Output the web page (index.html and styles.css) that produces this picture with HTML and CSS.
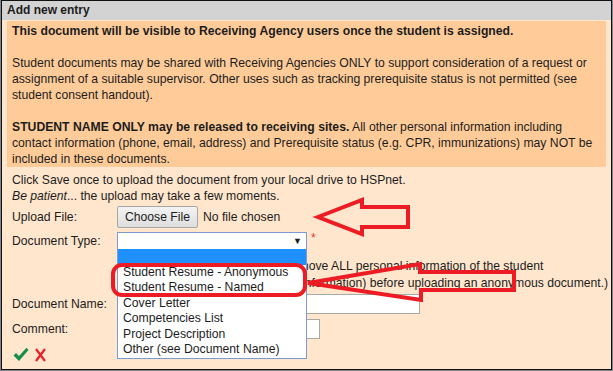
FILE: index.html
```html
<!DOCTYPE html>
<html lang="en">
<head>
    <meta charset="UTF-8">
    <title>Add new entry</title>
    <link rel="stylesheet" href="styles.css">
</head>
<body>
    <div class="dialog">
        <div class="title-bar">Add new entry</div>
        <div class="content">
            <div class="notice">
                <p><b>This document will be visible to Receiving Agency users once the student is assigned.</b></p>
                <p>Student documents may be shared with Receiving Agencies ONLY to support consideration of a request or assignment of a suitable supervisor. Other uses such as tracking prerequisite status is not permitted (see student consent handout).</p>
                <p><b>STUDENT NAME ONLY may be released to receiving sites.</b> All other personal information including contact information (phone, email, address) and Prerequisite status (e.g. CPR, immunizations) may NOT be included in these documents.</p>
            </div>

            <p class="intro">Click Save once to upload the document from your local drive to HSPnet.<br><i>Be patient</i>... the upload may take a few moments.</p>

            <div class="form-row upload-row">
                <label>Upload File:</label>
                <button type="button" class="file-btn">Choose File</button>
                <span class="file-name">No file chosen</span>
            </div>

            <div class="form-row type-row">
                <label>Document Type:</label>
                <div class="select-wrap">
                    <div class="select">
                        <span class="select-arrow">&#9660;</span>
                    </div>
                    <ul class="options">
                        <li class="selected">&nbsp;</li>
                        <li>Student Resume - Anonymous</li>
                        <li>Student Resume - Named</li>
                        <li>Cover Letter</li>
                        <li>Competencies List</li>
                        <li>Project Description</li>
                        <li>Other (see Document Name)</li>
                    </ul>
                </div>
                <span class="required">*</span>
            </div>

            <p class="type-note">(For an anonymous file, please remove ALL personal information of the student<br>(name, phone, e-mail and contact information) before uploading an anonymous document.)</p>

            <div class="form-row name-row">
                <label>Document Name:</label>
                <input type="text" class="text-input name-input">
            </div>

            <div class="form-row comment-row">
                <label>Comment:</label>
                <input type="text" class="text-input comment-input">
            </div>

            <div class="actions">
                <svg class="icon-save" width="16" height="15" viewBox="0 0 16 15">
                    <path d="M0.5 8.5 L3 6 L6 9 L13.5 0.8 L15.5 3 L6 14 Z" />
                </svg>
                <svg class="icon-cancel" width="11" height="14" viewBox="0 0 11 14">
                    <path d="M1 1 L10 13 M10 1 L1 13" />
                </svg>
            </div>
        </div>

        <!-- red markup drawn over the screenshot -->
        <svg class="markup" width="613" height="371" viewBox="0 0 613 371">
            <polygon points="318,217 362,200 362,207 408,207 408,227 362,227 362,234" />
            <rect x="113" y="265" width="192" height="30" rx="9" />
            <polygon points="308,283 420,264 420,272 514,272 514,290 421,290 421,300" />
        </svg>
    </div>
</body>
</html>
```

FILE: styles.css
```css
* {
    margin: 0;
    padding: 0;
    box-sizing: border-box;
}

body {
    font-family: Arial, "Liberation Sans", sans-serif;
    font-size: 12.2px;
    line-height: 16px;
    color: #1c1c1c;
    background: #7d8790;
    width: 613px;
    height: 371px;
    overflow: hidden;
}

.dialog {
    position: relative;
    margin-left: 1px;
    width: 611px;
    height: 370px;
    border: 1px solid #111;
    background: #ffe6cc;
}

.title-bar {
    background: #d3d3d3;
    font-weight: bold;
    font-size: 12px;
    height: 19px;
    line-height: 18px;
    padding-left: 5px;
}

.content {
    padding: 1px 5px 0 5px;
}

.notice {
    background: #ffcc99;
    padding: 2px 5px 0 5px;
    height: 146px;
}

.notice p {
    margin-bottom: 16px;
}

.notice p:last-child {
    margin-bottom: 0;
}

.intro {
    padding: 5px 5px 0 5px;
}

.form-row {
    display: flex;
    align-items: center;
    padding-left: 5px;
}

.form-row label {
    width: 105px;
    flex-shrink: 0;
}

.upload-row {
    margin-top: 2px;
    height: 22px;
}

.file-btn {
    font-family: inherit;
    font-size: 12.2px;
    color: #1c1c1c;
    height: 22px;
    width: 81px;
    border: 1px solid #a6a6a6;
    border-radius: 2px;
    background: linear-gradient(#f3f3f3, #dedede);
}

.file-name {
    margin-left: 5px;
}

.type-row {
    margin-top: 4px;
    height: 18px;
}

.select-wrap {
    position: relative;
}

.select {
    width: 190px;
    height: 18px;
    background: #fff;
    border: 1px solid #7b9bd1;
    position: relative;
}

.select-arrow {
    position: absolute;
    right: 4px;
    top: 0;
    font-size: 9px;
    line-height: 16px;
}

.options {
    position: absolute;
    left: 0;
    top: 17px;
    width: 190px;
    list-style: none;
    background: #fff;
    border: 1px solid #7b9bd1;
    border-top: none;
    z-index: 2;
}

.options li {
    height: 15.5px;
    line-height: 15.5px;
    padding-left: 5px;
    white-space: nowrap;
}

.options li.selected {
    background: #1e90ff;
}

.required {
    color: #e8322e;
    font-size: 12px;
    margin-left: 4px;
    align-self: flex-start;
    line-height: 12px;
}

.type-note {
    margin: 8px 0 0 110px;
    line-height: 17px;
    white-space: nowrap;
}

.name-row {
    margin-top: 2px;
    height: 20px;
}

.text-input {
    height: 20px;
    border: 1px solid #a9a9a9;
    background: #fff;
}

.name-input {
    width: 303px;
}

.comment-row {
    margin-top: 5px;
    height: 20px;
}

.comment-input {
    width: 203px;
}

.actions {
    margin-top: 8px;
    padding-left: 6px;
    display: flex;
    align-items: center;
    gap: 6px;
}

.icon-save path {
    fill: #14904a;
}

.icon-cancel path {
    fill: none;
    stroke: #e8202a;
    stroke-width: 2.2;
}

.markup {
    position: absolute;
    left: -2px;
    top: -1px;
    z-index: 3;
    pointer-events: none;
}

.markup polygon,
.markup rect {
    fill: none;
    stroke: #ed1c24;
    stroke-width: 4;
    stroke-linejoin: miter;
}
```
